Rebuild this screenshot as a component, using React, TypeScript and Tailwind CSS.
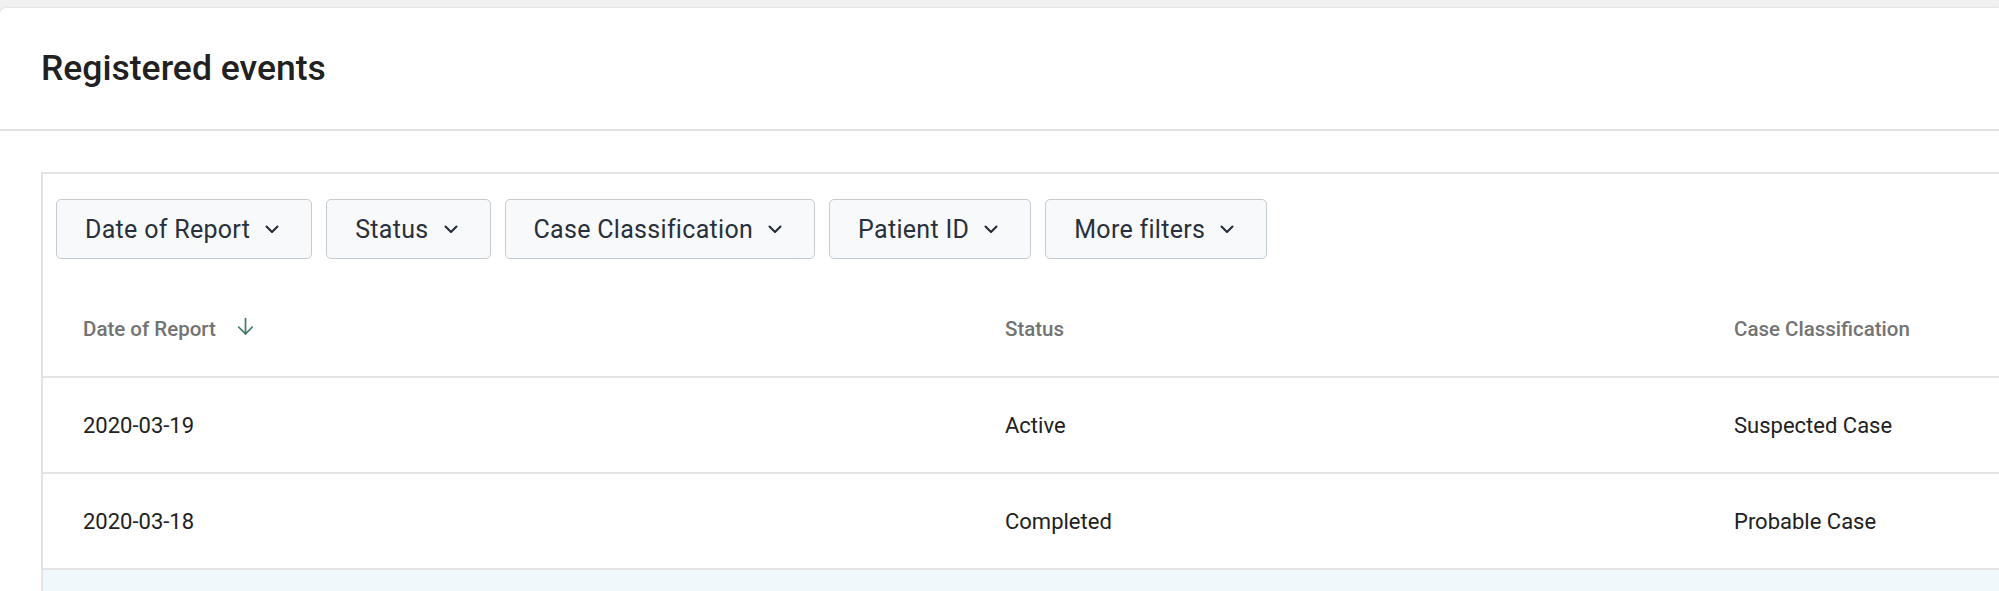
import React from "react";

function Chevron() {
  return (
    <svg width="24" height="24" viewBox="0 0 24 24" fill="none" className="ml-[10px] shrink-0">
      <path d="M6.5 9.5 L12 15 L17.5 9.5" stroke="#212934" strokeWidth="2" strokeLinecap="round" strokeLinejoin="round" />
    </svg>
  );
}

function SortArrow() {
  return (
    <svg width="19" height="19" viewBox="0 0 18 18" fill="none" className="ml-[20px] mb-[6px]">
      <path d="M9 1.5 V16" stroke="#3f7a63" strokeWidth="1.6" strokeLinecap="round" />
      <path d="M2.5 9.5 L9 16 L15.5 9.5" stroke="#3f7a63" strokeWidth="1.6" strokeLinecap="round" strokeLinejoin="round" />
    </svg>
  );
}

const filters = ["Date of Report", "Status", "Case Classification", "Patient ID", "More filters"];

const rows = [
  ["2020-03-19", "Active", "Suspected Case"],
  ["2020-03-18", "Completed", "Probable Case"],
];

export default function App() {
  return (
    <div className="w-full h-[591px] overflow-hidden bg-[#f1f1f1] pt-2 font-['Roboto',sans-serif]">
      <div className="bg-white rounded-tl-[6px] shadow-[0_0_3px_rgba(0,0,0,0.12)] h-[583px]">
        <div className="h-[123px] flex items-center pl-[41px] border-b-2 border-[#e2e2e2]">
          <h1 className="text-[35.5px] font-medium text-[#212121] leading-none">Registered events</h1>
        </div>
        <div className="pt-[41px] pl-[41px]">
          <div className="w-[2100px] border-l-2 border-t-2 border-[#e4e4e4]">
            <div className="flex gap-[14px] pl-[13px] pt-[25px] pb-[24px]">
              {filters.map((f) => (
                <button
                  key={f}
                  className="h-[60px] flex items-center pl-[28px] pr-[27px] bg-[#f8f9fa] border border-[#c6cbd0] rounded-[5px] text-[25px] text-[#28303b] leading-none tracking-[0.3px]"
                >
                  <span>{f}</span>
                  <Chevron />
                </button>
              ))}
            </div>
            <div className="flex h-[95px] items-center border-b-2 border-[#e4e4e4] text-[20.5px] font-medium text-[#737373]">
              <div className="w-[922px] pl-[40px] flex items-center">
                <span>Date of Report</span>
                <SortArrow />
              </div>
              <div className="w-[729px] pl-[40px]">Status</div>
              <div className="pl-[40px]">Case Classification</div>
            </div>
            {rows.map((r) => (
              <div key={r[0]} className="flex h-[96px] items-center border-b-2 border-[#e4e4e4] text-[22px] text-[#212121]">
                <div className="w-[922px] pl-[40px]">{r[0]}</div>
                <div className="w-[729px] pl-[40px]">{r[1]}</div>
                <div className="pl-[40px]">{r[2]}</div>
              </div>
            ))}
            <div className="h-[96px] bg-[#f1f8fc]" />
          </div>
        </div>
      </div>
    </div>
  );
}
